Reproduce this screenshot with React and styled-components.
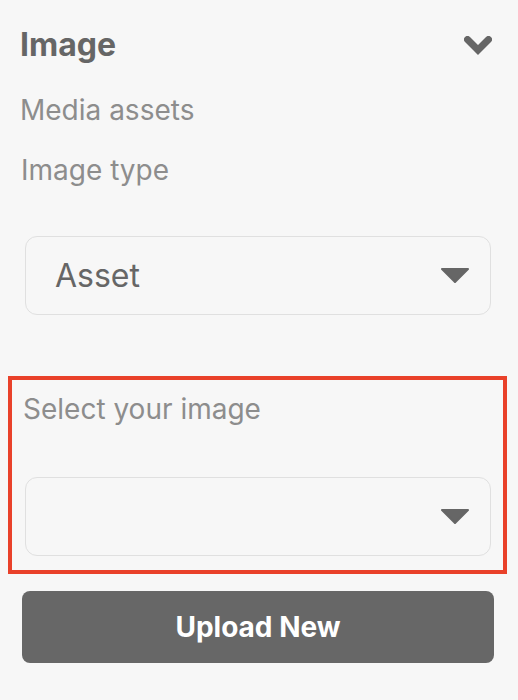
import React from "react";
import styled, { createGlobalStyle } from "styled-components";

const Global = createGlobalStyle`
  html, body { margin: 0; padding: 0; background: #f7f7f7; }
  body { font-family: Inter, "Noto Sans", sans-serif; -webkit-font-smoothing: antialiased; }
`;

const Panel = styled.div`
  display: flex;
  flex-direction: column;
  padding: 25px 24px 0 20px;
  width: 518px;
  box-sizing: border-box;
`;

const Header = styled.div`
  display: flex;
  align-items: center;
  justify-content: space-between;
`;

const Title = styled.h2`
  margin: 0;
  font-size: 32px;
  line-height: 40px;
  font-weight: 700;
  color: #666666;
`;

const ChevronButton = styled.button`
  border: 0;
  background: none;
  padding: 0;
  margin-right: 2px;
  display: flex;
  cursor: pointer;
`;

const Label = styled.div`
  font-size: 28px;
  line-height: 34px;
  color: #8d8d8d;
  margin-top: ${(p) => p.$top}px;
  margin-left: ${(p) => p.$left || 0}px;
`;

const Select = styled.div`
  display: flex;
  align-items: center;
  justify-content: space-between;
  height: 79px;
  box-sizing: border-box;
  margin: ${(p) => p.$top}px ${(p) => (p.$flush ? 0 : 3)}px 0 ${(p) => (p.$flush ? 0 : 5)}px;
  padding: 0 21px 0 29px;
  border: 1px solid #e0e0e0;
  border-radius: 12px;
  background: #f7f7f7;
`;

const SelectValue = styled.span`
  font-size: 32px;
  line-height: 38px;
  color: #666666;
`;

const Highlight = styled.div`
  display: flex;
  flex-direction: column;
  margin: 61px -13px 0 -12px;
  padding: 12px 12px 14px 13px;
  border: 4px solid #e9412a;
`;

const UploadButton = styled.button`
  margin: 17px 0 0 2px;
  height: 72px;
  border: 0;
  border-radius: 8px;
  background: #676767;
  color: #ffffff;
  font-family: Inter, "Noto Sans", sans-serif;
  font-size: 28px;
  font-weight: 700;
  cursor: pointer;
`;

const Chevron = () => (
  <svg width="28" height="19" viewBox="0 0 28 19">
    <path
      d="M3.5 3.5 L14 14 L24.5 3.5"
      fill="none"
      stroke="#666666"
      strokeWidth="7"
      strokeLinecap="round"
      strokeLinejoin="miter"
    />
  </svg>
);

const Caret = () => (
  <svg width="28" height="15" viewBox="0 0 28 15">
    <path
      d="M1 1 L27 1 L14 14 Z"
      fill="#666666"
      stroke="#666666"
      strokeWidth="2"
      strokeLinejoin="round"
    />
  </svg>
);

export default function App() {
  return (
    <>
      <Global />
      <Panel>
        <Header>
          <Title>Image</Title>
          <ChevronButton aria-label="Collapse">
            <Chevron />
          </ChevronButton>
        </Header>
        <Label $top={28}>Media assets</Label>
        <Label $top={26} $left={1}>Image type</Label>
        <Select $top={49}>
          <SelectValue>Asset</SelectValue>
          <Caret />
        </Select>
        <Highlight>
          <Label $top={0} $left={-2}>Select your image</Label>
          <Select $top={51} $flush>
            <SelectValue />
            <Caret />
          </Select>
        </Highlight>
        <UploadButton>Upload New</UploadButton>
      </Panel>
    </>
  );
}
